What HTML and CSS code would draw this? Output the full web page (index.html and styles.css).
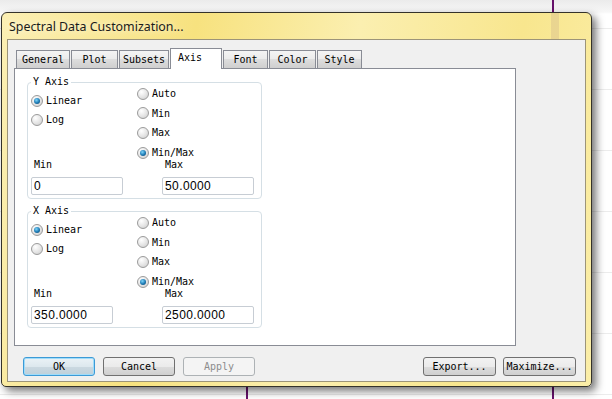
FILE: index.html
```html
<!DOCTYPE html>
<html lang="en">
<head>
    <meta charset="UTF-8">
    <title>Spectral Data Customization</title>
    <link rel="stylesheet" href="styles.css">
</head>
<body>

<div class="desktop">
    <div class="trace trace-top"></div>
    <div class="trace trace-bottom-a"></div>
    <div class="trace trace-bottom-b"></div>

    <div class="window">
        <div class="titlebar">
            <span class="title">Spectral Data Customization...</span>
            <span class="glass-mark"></span>
        </div>

        <div class="client">
            <div class="tabs">
                <div class="tab tab-general">General</div>
                <div class="tab tab-plot">Plot</div>
                <div class="tab tab-subsets">Subsets</div>
                <div class="tab tab-axis active">Axis</div>
                <div class="tab tab-font">Font</div>
                <div class="tab tab-color">Color</div>
                <div class="tab tab-style">Style</div>
            </div>

            <div class="panel">
                <!-- Y axis -->
                <div class="group">
                    <span class="group-title">Y Axis</span>
                    <div class="options">
                        <div class="scale">
                            <div class="opt"><span class="radio checked"></span>Linear</div>
                            <div class="opt"><span class="radio"></span>Log</div>
                        </div>
                        <div class="range">
                            <div class="opt"><span class="radio"></span>Auto</div>
                            <div class="opt"><span class="radio"></span>Min</div>
                            <div class="opt"><span class="radio"></span>Max</div>
                            <div class="opt"><span class="radio checked"></span>Min/Max</div>
                        </div>
                    </div>
                    <div class="limits">
                        <label class="field">
                            <span>Min</span>
                            <input type="text" class="box" value="0">
                        </label>
                        <label class="field">
                            <span>Max</span>
                            <input type="text" class="box" value="50.0000">
                        </label>
                    </div>
                </div>

                <!-- X axis -->
                <div class="group">
                    <span class="group-title">X Axis</span>
                    <div class="options">
                        <div class="scale">
                            <div class="opt"><span class="radio checked"></span>Linear</div>
                            <div class="opt"><span class="radio"></span>Log</div>
                        </div>
                        <div class="range">
                            <div class="opt"><span class="radio"></span>Auto</div>
                            <div class="opt"><span class="radio"></span>Min</div>
                            <div class="opt"><span class="radio"></span>Max</div>
                            <div class="opt"><span class="radio checked"></span>Min/Max</div>
                        </div>
                    </div>
                    <div class="limits">
                        <label class="field">
                            <span>Min</span>
                            <input type="text" class="box narrow" value="350.0000">
                        </label>
                        <label class="field">
                            <span>Max</span>
                            <input type="text" class="box" value="2500.0000">
                        </label>
                    </div>
                </div>
            </div>

            <div class="buttons">
                <button class="btn default">OK</button>
                <button class="btn">Cancel</button>
                <button class="btn" disabled>Apply</button>
                <button class="btn wide push">Export...</button>
                <button class="btn wide">Maximize...</button>
            </div>
        </div>
    </div>
</div>

</body>
</html>
```

FILE: styles.css
```css
body {
    margin: 0;
    font-family: "DejaVu Sans Mono", monospace;
    font-size: 10px;
    color: #000;
}
.desktop {
    position: relative;
    width: 612px;
    height: 399px;
    overflow: hidden;
    background:
        repeating-linear-gradient(to bottom, transparent 0 28px, #ececec 28px 29px, transparent 29px 61px),
        linear-gradient(to bottom, #ebebeb, #f7f7f7 12px, #fff 14px);
}
.trace {
    position: absolute;
    width: 2px;
    background-color: #66106a;
}
.trace-top {
    left: 552px;
    top: 0;
    height: 13px;
}
.trace-bottom-a {
    left: 246px;
    top: 386px;
    height: 13px;
}
.trace-bottom-b {
    left: 552px;
    top: 386px;
    height: 13px;
}

/* window frame */
.window {
    position: absolute;
    left: 1px;
    top: 12px;
    width: 591px;
    height: 375px;
    box-sizing: border-box;
    border: 1px solid #34322a;
    border-radius: 6px 6px 5px 5px;
    background: linear-gradient(100deg, #fbefb4 0%, #f7e27f 30%, #fbefb0 55%, #f8e68e 80%, #fbeea8 100%);
    box-shadow: 4px 4px 8px rgba(0, 0, 0, 0.55);
    display: flex;
    flex-direction: column;
}
.titlebar {
    position: relative;
    height: 26px;
    display: flex;
    align-items: center;
    padding-left: 7px;
}
.title {
    font-family: "Noto Sans", sans-serif;
    font-size: 12.4px;
    color: #1a1a1a;
    text-shadow: 0 0 6px rgba(255, 255, 255, 0.9);
}
.glass-mark {
    position: absolute;
    left: 549px;
    top: 0;
    width: 8px;
    height: 26px;
    background-color: rgba(214, 190, 140, 0.45);
}
.client {
    margin: 0 5px;
    height: 343px;
    box-sizing: border-box;
    border: 1px solid #9c9479;
    background-color: #f0f0f0;
    padding: 8px 9px 0 6px;
}

/* tabs */
.tabs {
    display: flex;
    align-items: flex-end;
    gap: 1px;
    margin-left: 2px;
    height: 20px;
}
.tab {
    height: 18px;
    box-sizing: border-box;
    border: 1px solid #898c95;
    border-bottom: none;
    background: linear-gradient(to bottom, #f4f4f4, #ebebeb 50%, #dddddd 50%, #cfcfcf);
    text-align: center;
    line-height: 17px;
}
.tab-general { width: 54px; }
.tab-plot { width: 47px; }
.tab-subsets { width: 50px; }
.tab-font { width: 45px; }
.tab-color { width: 47px; }
.tab-style { width: 45px; }
.tab.active {
    width: 52px;
    height: 21px;
    margin-bottom: -1px;
    background: #fff;
    position: relative;
    line-height: 18px;
    text-align: left;
    padding-left: 7px;
}

.panel {
    width: 502px;
    height: 278px;
    box-sizing: border-box;
    border: 1px solid #898c95;
    background-color: #fff;
    padding: 13px 0 0 12px;
}

/* group boxes */
.group {
    position: relative;
    width: 235px;
    box-sizing: border-box;
    border: 1px solid #d5dfe5;
    border-radius: 4px;
    padding: 0 0 3px 3px;
    margin-bottom: 12px;
}
.group-title {
    position: absolute;
    top: -7px;
    left: 3px;
    padding: 0 2px;
    line-height: 12px;
    background-color: #fff;
}
.options {
    display: flex;
}
.scale {
    width: 106px;
    padding-top: 11px;
    display: flex;
    flex-direction: column;
    gap: 6px;
}
.range {
    padding-top: 4px;
    display: flex;
    flex-direction: column;
    gap: 6.7px;
}
.opt {
    display: flex;
    align-items: center;
    gap: 3px;
    height: 13px;
}
.radio {
    width: 12px;
    height: 12px;
    box-sizing: border-box;
    border-radius: 50%;
    border: 1px solid #9b9b9b;
    background: radial-gradient(circle at 35% 30%, #ffffff, #e4e4e4 55%, #c9c9c9);
    display: flex;
    align-items: center;
    justify-content: center;
}
.radio.checked::after {
    content: "";
    width: 6px;
    height: 6px;
    border-radius: 50%;
    background: radial-gradient(circle at 40% 35%, #7fd6fb, #1b78b2 55%, #0b3e64);
}

.limits {
    display: grid;
    grid-template-columns: 131px 1fr;
}
.field {
    display: flex;
    flex-direction: column;
}
.field span {
    line-height: 12px;
    padding-left: 3px;
}
.box {
    margin: 6px 0 0;
    width: 92px;
    height: 18px;
    box-sizing: border-box;
    border: 1px solid #c7cdd4;
    border-radius: 2px;
    padding: 0 2px;
    font-family: "Liberation Sans", Arial, sans-serif;
    font-size: 12px;
    letter-spacing: 0.4px;
    color: #000;
    outline: none;
}
.box.narrow {
    width: 82px;
}

/* bottom buttons */
.buttons {
    display: flex;
    gap: 8px;
    margin-top: 11px;
    padding-left: 9px;
}
.btn {
    width: 72px;
    height: 19px;
    padding: 0;
    box-sizing: border-box;
    border: 1px solid #707070;
    border-radius: 3px;
    background: linear-gradient(to bottom, #f2f2f2, #ebebeb 50%, #dddddd 50%, #cfcfcf);
    font-family: "DejaVu Sans Mono", monospace;
    font-size: 10px;
    color: #000;
}
.btn.default {
    border-color: #3c9ad6;
    box-shadow: inset 0 0 0 1px #9fdcfa;
    background: linear-gradient(to bottom, #eaf2f6, #dde8ee 50%, #cbd9e1 50%, #bfd0da);
}
.btn:disabled {
    border-color: #adb2b5;
    background: #f4f4f4;
    color: #8d8d8d;
}
.btn.wide {
    width: 73px;
}
.push {
    margin-left: auto;
}
.btn.wide + .btn.wide {
    margin-left: -1px;
}
```
